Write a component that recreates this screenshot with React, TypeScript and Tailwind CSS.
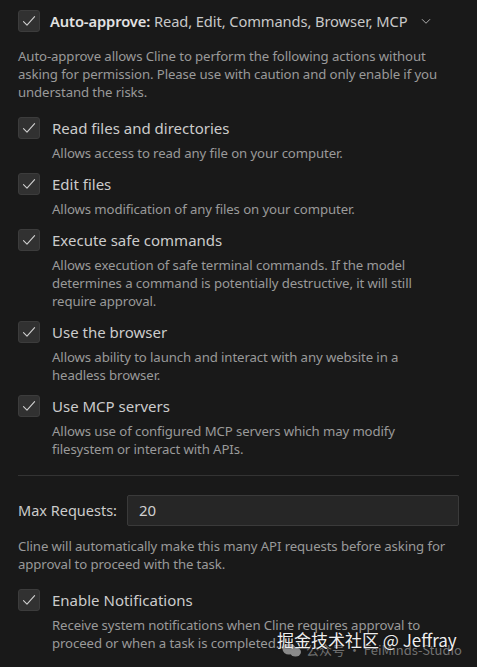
import React from "react";

const Check = () => (
  <div className="w-[22px] h-[22px] shrink-0 rounded-[3px] bg-[#313131] border border-[#3c3c3c] flex items-center justify-center">
    <svg width="16" height="16" viewBox="0 0 16 16" fill="none">
      <path d="M2.5 8.6 L6 12.2 L13.6 3.6" stroke="#d0d0d0" strokeWidth="1.1" strokeLinecap="round" strokeLinejoin="round" />
    </svg>
  </div>
);

const Item = ({ label, desc, className = "" }: { label: string; desc: string; className?: string }) => (
  <div className={className}>
    <div className="flex items-center gap-[12px] h-[22px]">
      <Check />
      <span className="text-[15px] text-[#cccccc] leading-[22px]">{label}</span>
    </div>
    <div className="ml-[34px] mt-[5px] text-[13.2px] tracking-[-0.1px] leading-[18px] text-[#9a9a9a] pr-[20px]">{desc}</div>
  </div>
);

export default function App() {
  return (
    <div
      className="relative w-[477px] h-[667px] overflow-hidden bg-[#191919] px-[18px] pt-[10px]"
      style={{ fontFamily: '"Noto Sans", "Open Sans", sans-serif' }}
    >
      <div className="flex items-center gap-[10px] h-[22px]">
        <Check />
        <span className="text-[14.7px] tracking-[-0.1px] leading-[22px] text-[#c8c8c8] whitespace-nowrap">
          <span className="font-semibold text-[#e2e2e2]">Auto-approve:</span> Read, Edit, Commands, Browser, MCP
        </span>
        <svg width="12" height="12" viewBox="0 0 16 16" fill="none" className="ml-[2px]">
          <path d="M3 6 L8 11 L13 6" stroke="#b0b0b0" strokeWidth="1.3" strokeLinecap="round" strokeLinejoin="round" />
        </svg>
      </div>
      <p className="mt-[15px] text-[13.2px] tracking-[-0.1px] leading-[18px] text-[#9a9a9a]">
        Auto-approve allows Cline to perform the following actions without asking for permission. Please use with caution and only enable if you understand the risks.
      </p>
      <div className="mt-[16px] flex flex-col gap-[11px]">
        <Item label="Read files and directories" desc="Allows access to read any file on your computer." />
        <Item label="Edit files" desc="Allows modification of any files on your computer." />
        <Item
          label="Execute safe commands"
          desc="Allows execution of safe terminal commands. If the model determines a command is potentially destructive, it will still require approval."
        />
        <Item label="Use the browser" desc="Allows ability to launch and interact with any website in a headless browser." />
        <Item label="Use MCP servers" desc="Allows use of configured MCP servers which may modify filesystem or interact with APIs." />
      </div>
      <div className="mt-[17px] h-px bg-[#333333]" />
      <div className="mt-[19px] flex items-center gap-[10px]">
        <span className="text-[14.5px] text-[#cccccc] whitespace-nowrap">Max Requests:</span>
        <div className="flex-1 h-[31px] rounded-[2px] bg-[#262626] border border-[#3a3a3a] flex items-center px-[11px] text-[15px] text-[#d0d0d0]">
          20
        </div>
      </div>
      <p className="mt-[11px] text-[13.2px] tracking-[-0.1px] leading-[18px] text-[#9a9a9a]">
        Cline will automatically make this many API requests before asking for approval to proceed with the task.
      </p>
      <Item
        className="mt-[16px]"
        label="Enable Notifications"
        desc="Receive system notifications when Cline requires approval to proceed or when a task is completed."
      />
      <div className="absolute left-[282px] top-[640px] flex items-center gap-[4px] text-[13px] text-[#8a8a8a]/80 whitespace-nowrap">
        <svg width="20" height="16" viewBox="0 0 20 16" fill="#8a8a8a">
          <ellipse cx="7" cy="7" rx="6.5" ry="5.5" />
          <ellipse cx="13.5" cy="10" rx="5.5" ry="4.5" />
        </svg>
        <span style={{ fontFamily: '"Noto Sans CJK SC", sans-serif' }}>公众号 · FeiMinds-Studio</span>
      </div>
      <div
        className="absolute left-[277px] top-[627px] text-[17px] text-[#eeeeee] whitespace-nowrap"
        style={{ fontFamily: '"Noto Sans CJK SC", sans-serif', textShadow: "0 0 2px rgba(0,0,0,0.6)" }}
      >
        掘金技术社区 @ Jeffray
      </div>
    </div>
  );
}
